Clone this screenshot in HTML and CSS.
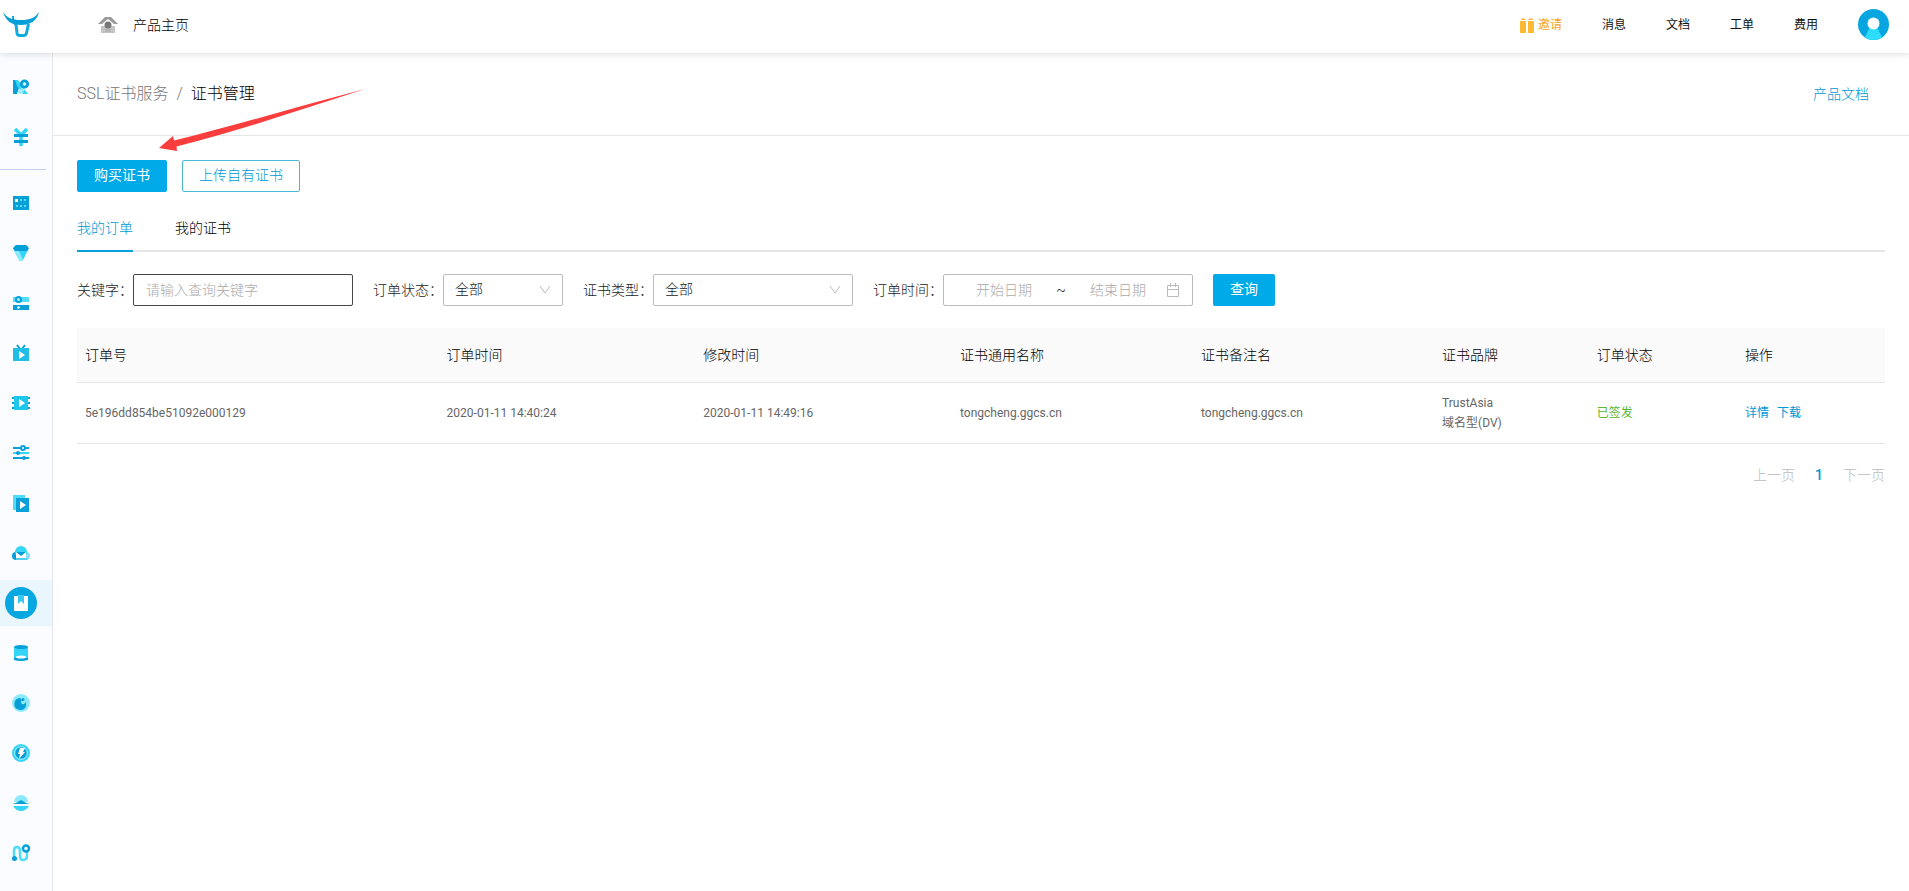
FILE: index.html
```html
<!DOCTYPE html>
<html lang="zh-CN">
<head>
<meta charset="utf-8">
<title>证书管理</title>
<link rel="stylesheet" href="styles.css">
</head>
<body>
<header class="topbar">
  <a class="logo" href="#" aria-label="首页">
    <svg width="38" height="28" viewBox="0 0 38 28"><path d="M1 1C5 7 10 9 19 9S33 7 37 1C35 10 28 14 19 14 9 14 4 10 1 1Z" fill="#079fd8"/><path d="M10 5h2v5l2 4H12Q10 10 10 5Z" fill="#079fd8"/><path d="M14 13l1 9q.4 2.500 2.500 2.500h4q2.500 0 3-2.500l2-9" fill="none" stroke="#12a9df" stroke-width="3"/></svg>
  </a>
  <a class="home" href="#">
    <svg width="20" height="17" viewBox="0 0 20 17"><path d="M0 8 7 1h6l7 7h-4l-6-5-6 5Z" fill="#999"/><path d="M3 10h14v7H3Z" fill="#c4c4c4"/><circle cx="10" cy="9" r="3.500" fill="#777"/><path d="M7 13h6v3H7Z" fill="#b4b4b4"/></svg>
    <span>产品主页</span>
  </a>
  <nav class="topnav">
    <a class="invite" href="#"><svg width="14" height="16" viewBox="0 0 14 16" fill="#fdb933"><path d="M0 4h6v2H0zM8 4h6v2H8zM0 6h6v10H0zM8 6h6v10H8z"/><path d="M1 3Q2-1 6 3ZM8 3q4-4 5 0Z"/></svg>邀请</a>
    <a href="#">消息</a><a href="#">文档</a><a href="#">工单</a><a href="#">费用</a>
  </nav>
  <button class="avatar" aria-label="账户"><svg width="31" height="31" viewBox="0 0 31 31"><circle cx="15.500" cy="15.500" r="15.500" fill="#07a6e1"/><path d="M12 18h7l5 10.500Q15.500 33.500 7 28.500Z" fill="#2ddcff"/><circle cx="15.500" cy="14.500" r="6" fill="#fff"/></svg></button>
</header>
<div class="shell">
  <nav class="sidebar" aria-label="产品">
    <a href="#"><svg width="18" height="18" viewBox="0 0 18 18"><path d="M1 2h4l3 5-3 9H1Z" fill="#079fd8"/><path d="M3 2h3l10 14h-5L5 8Z" fill="#35d5f7"/><path d="m5 15 5-6 3 3-4 4Z" fill="#9cecfc"/><circle cx="12.500" cy="6" r="3.200" fill="#d8f7ff" stroke="#079fd8" stroke-width="2.800"/></svg></a>
    <a href="#"><svg width="18" height="18" viewBox="0 0 18 18"><path d="m3 1 6 6 6-6M9 6v12" fill="none" stroke="#35d5f7" stroke-width="3.500"/><path d="M2 6h14v3H2zM2 12h14v3H2z" fill="#079fd8"/></svg></a>
    <hr>
    <a href="#"><svg width="18" height="18" viewBox="0 0 18 18"><path d="M1 2h16v14H1Z" fill="#07a0d9"/><path d="M3 5h3v3H3Z" fill="#fff"/><path d="M8 5h2v2H8zM12 5h2v2h-2zM4 11h2v2H4zM8 11h2v2H8zM12 11h2v2h-2z" fill="#4fe0fb"/></svg></a>
    <a href="#"><svg width="18" height="18" viewBox="0 0 18 18"><path d="M2 6h14L11 16q-2 2-4 0Z" fill="#35d5f7"/><path d="M2 7h5l4 9q-2 2-4 0Z" fill="#8beafa"/><path d="M4 1h10q5 3 1 6H3Q-1 4 4 1Z" fill="#079fd8"/></svg></a>
    <a href="#"><svg width="18" height="18" viewBox="0 0 18 18"><path d="M1 3h16v5H1Z" fill="#4fdcf8"/><path d="M1 11h16v5H1Z" fill="#079fd8"/><circle cx="6.500" cy="5.500" r="2.500" fill="#aaf2ff" stroke="#079fd8" stroke-width="2"/><circle cx="6.500" cy="13.500" r="1.300" fill="#fff"/></svg></a>
    <a href="#"><svg width="18" height="18" viewBox="0 0 18 18"><path d="m5 1 3 4M13 1l-3 4" stroke="#079fd8" stroke-width="2"/><path d="M1 4h16v13H1Z" fill="#20bde7"/><path d="m7 7 6 4-6 4Z" fill="#fff"/></svg></a>
    <a href="#"><svg width="18" height="18" viewBox="0 0 18 18"><path d="M2 2h14v14H2Z" fill="#20c7ed"/><path d="M0 3h2v2H0zM0 8h2v2H0zM0 13h2v2H0zM16 3h2v2h-2zM16 8h2v2h-2zM16 13h2v2h-2z" fill="#079fd8"/><path d="m7 5 6 4-6 4Z" fill="#fff"/></svg></a>
    <a href="#"><svg width="18" height="18" viewBox="0 0 18 18" fill="none" stroke="#079fd8" stroke-width="2"><path d="M1 4h16M1 14h16"/><path d="M1 9h16" stroke="#35d5f7"/><circle cx="11" cy="4" r="2" fill="#fff"/><circle cx="6" cy="9" r="1"/><circle cx="12" cy="14" r="1"/></svg></a>
    <a href="#"><svg width="18" height="18" viewBox="0 0 18 18"><path d="M1 1h12v15H1Z" fill="#4fdcf8"/><path d="M4 4h13v14H4Z" fill="#07a0d9"/><path d="m8 7 6 4-6 4Z" fill="#fff"/></svg></a>
    <a href="#"><svg width="18" height="18" viewBox="0 0 18 18"><circle cx="4" cy="12" r="4" fill="#079fd8"/><circle cx="14" cy="12" r="4" fill="#8bdcf4"/><circle cx="9" cy="8" r="6" fill="#35d5f7"/><path d="M4 8h10v6H4Z" fill="#fff"/><path d="m4 8 5 4 5-4Z" fill="#079fd8"/><path d="M4 14h11v2H4Z" fill="#53cdee"/></svg></a>
    <a class="current" href="#" aria-current="page"><svg width="32" height="32" viewBox="0 0 32 32"><circle cx="16" cy="16" r="16" fill="#07a7e2"/><path d="M9 9h14v15H9Z" fill="#fff"/><path d="M13 8h6v9l-3-3-3 3Z" fill="#36c8ee"/></svg></a>
    <a href="#"><svg width="18" height="18" viewBox="0 0 18 18"><path d="M2 3h14v12H2Z" fill="#35d5f7"/><ellipse cx="9" cy="3" rx="7" ry="2" fill="#079fd8"/><path d="M2 14h14v2q-7 2-14 0Z" fill="#079fd8"/><ellipse cx="9" cy="13" rx="5" ry="1.500" fill="#fff"/></svg></a>
    <a href="#"><svg width="18" height="18" viewBox="0 0 18 18"><circle cx="9" cy="9" r="9" fill="#8beafa"/><path d="M8 4a6 6 0 1 0 6 8V8q-2 3-4 2-2-2 0-4Z" fill="#079fd8"/><circle cx="11" cy="5.500" r="1.500" fill="#079fd8"/></svg></a>
    <a href="#"><svg width="18" height="18" viewBox="0 0 18 18"><circle cx="9" cy="9" r="9" fill="#35d5f7"/><circle cx="9" cy="9" r="6.300" fill="#079fd8" stroke="#b5f2fc"/><path d="M8 4h5l-2 4h2l-6 7 1-5H6Z" fill="#fff"/></svg></a>
    <a href="#"><svg width="18" height="18" viewBox="0 0 18 18"><path d="M2 8a7 7 0 0 1 14 0Z" fill="#8beafa"/><path d="M0 10Q5 9 9 6q4 3 9 4Z" fill="#079fd8"/><path d="M1 12h16q-3 5-8 5T1 12Z" fill="#35d5f7"/></svg></a>
    <a href="#"><svg width="18" height="18" viewBox="0 0 18 18" fill="none"><path d="M2 14V7q0-4 3-4t3 4v5q0 4 3 4 4 0 4-5V7" stroke="#4fdcf8" stroke-width="2.500"/><circle cx="2.500" cy="14.500" r="2.500" fill="#079fd8"/><circle cx="14" cy="4.500" r="3" fill="#fff" stroke="#079fd8" stroke-width="2.500"/></svg></a>
  </nav>
  <main class="content">
    <div class="pagehead">
      <nav class="crumbs"><a href="#">SSL证书服务</a><span class="slash">/</span><span class="here">证书管理</span></nav>
      <a class="docs" href="#">产品文档</a>
      <svg class="pointer" width="206" height="64" viewBox="0 0 206 64"><path d="M0 59 14 47 15 51.500C75 37 140 17 206 0 140 21 80 42 17.500 57.500L18 62Z" fill="#fa3d3d"/></svg>
    </div>
    <div class="body">
      <div class="actions"><button class="btn primary">购买证书</button><button class="btn outline">上传自有证书</button></div>
      <div class="tabs" role="tablist"><button class="tab selected" role="tab" aria-selected="true">我的订单</button><button class="tab" role="tab" aria-selected="false">我的证书</button></div>
      <form class="filters">
        <div class="field"><label for="kw">关键字：</label><input class="box keyword" id="kw" type="text" placeholder="请输入查询关键字"></div>
        <div class="field"><label for="state">订单状态：</label><select class="box state" id="state"><option>全部</option></select></div>
        <div class="field"><label for="type">证书类型：</label><select class="box type" id="type"><option>全部</option></select></div>
        <div class="field"><label for="from">订单时间：</label>
          <div class="box range"><input id="from" type="text" placeholder="开始日期"><span>~</span><input type="text" placeholder="结束日期" aria-label="结束日期"><svg width="14" height="14" viewBox="0 0 14 14" fill="none" stroke="#bbb"><path d="M1.500 2.500h11v11h-11ZM1.500 6.500h11M4.500 0v4M9.500 0v4"/></svg></div></div>
        <button class="btn primary" type="button">查询</button>
      </form>
      <table class="orders">
        <colgroup><col class="c-id"><col class="c-time"><col class="c-time"><col class="c-name"><col class="c-name"><col class="c-brand"><col class="c-state"><col class="c-state"></colgroup>
        <thead><tr><th>订单号</th><th>订单时间</th><th>修改时间</th><th>证书通用名称</th><th>证书备注名</th><th>证书品牌</th><th>订单状态</th><th>操作</th></tr></thead>
        <tbody><tr><td>5e196dd854be51092e000129</td><td>2020-01-11 14:40:24</td><td>2020-01-11 14:49:16</td><td>tongcheng.ggcs.cn</td><td>tongcheng.ggcs.cn</td><td>TrustAsia<br>域名型(DV)</td><td class="issued">已签发</td><td><div class="ops"><a href="#">详情</a><a href="#">下载</a></div></td></tr></tbody>
      </table>
      <nav class="pager" aria-label="分页"><button disabled>上一页</button><a href="#" aria-current="page">1</a><button disabled>下一页</button></nav>
    </div>
  </main>
</div>
</body>
</html>
```
FILE: styles.css
```css
* { box-sizing: border-box; }
body {
  margin: 0;
  min-height: 100vh;
  display: flex;
  flex-direction: column;
  background: #fff;
  color: #000;
  font: 300 14px/20px Roboto, "Noto Sans CJK SC", sans-serif;
}
a { color: #0098d4; text-decoration: none; }
button, input, select { font: inherit; color: inherit; margin: 0; }
button { border: 0; background: none; padding: 0; cursor: pointer; }
svg { display: block; flex: none; }

.topbar {
  position: relative;
  z-index: 2;
  display: flex;
  align-items: center;
  height: 53px;
  padding: 0 20px 4px 2px;
  background: #fff;
  box-shadow: 0 1px 7px rgba(0, 0, 0, .14);
}
.home { display: flex; align-items: center; gap: 15px; margin-left: 58px; color: #000; }
.topnav { display: flex; gap: 40px; margin: 0 40px 0 auto; font-size: 12px; font-weight: 400; }
.topnav a { color: #111; }
.topnav .invite { display: flex; align-items: center; gap: 4px; color: #f5a623; }

.shell { flex: 1; display: flex; }
.sidebar {
  width: 53px;
  flex: none;
  padding-top: 11px;
  background: #fafcff;
  border-right: 1px solid #e6e8ec;
}
.sidebar a {
  display: flex;
  align-items: center;
  justify-content: center;
  height: 46px;
  margin-bottom: 4px;
  padding-right: 10px;
}
.sidebar .current { background: #e9f6fe; }
.sidebar hr { width: 46px; height: 1px; margin: 9px 0 10px; border: 0; background: #c5cff0; }

.content { flex: 1; min-width: 0; }
.pagehead {
  position: relative;
  display: flex;
  align-items: center;
  justify-content: space-between;
  height: 83px;
  padding: 0 40px 0 24px;
  border-bottom: 1px solid #e6e6e6;
}
.crumbs { display: flex; gap: 8px; font-size: 16px; }
.crumbs a, .slash { color: #777; }
.pointer { position: absolute; left: 106px; top: 36px; z-index: 1; pointer-events: none; }

.body { padding: 24px; }
.actions { display: flex; gap: 15px; }
.btn { height: 32px; padding: 0 17px 2px; border-radius: 2px; }
.primary { background: #00a9e8; color: #fff; font-weight: 400; }
.outline { background: #fff; color: #0098d4; border: 1px solid #4bb8d8; padding: 0 16px 2px; }
.tabs { display: flex; gap: 42px; margin-top: 15px; box-shadow: inset 0 -2px #e6e6e6; }
.tab { height: 45px; padding-bottom: 1px; border-bottom: 2px solid transparent; }
.selected { color: #0098d4; border-color: #07a0d9; }

.filters { display: flex; flex-wrap: wrap; gap: 20px; margin-top: 22px; color: #222; }
.field { display: flex; align-items: center; }
.field label { width: 70px; white-space: nowrap; }
.field:first-child label { width: 56px; }
.box { height: 32px; border: 1px solid #bbb; border-radius: 2px; background-color: #fff; }
.keyword { width: 220px; padding: 0 12px; border-color: #444; }
input::placeholder { color: #aaa; opacity: 1; }
select.box {
  appearance: none;
  padding: 0 11px 2px;
  background: url("data:image/svg+xml,%3Csvg xmlns='http://www.w3.org/2000/svg' width='12' height='8'%3E%3Cpath d='M1 0l5 7 5-7' fill='none' stroke='%23bbb'/%3E%3C/svg%3E") no-repeat right 11px center;
}
.state { width: 120px; }
.type { width: 200px; }
.range { display: flex; align-items: center; width: 250px; padding: 0 12px; }
.range input { flex: 1; width: 0; min-width: 0; padding: 0; border: 0; text-align: center; background: none; }
.range span { width: 18px; text-align: center; }

.orders { width: 100%; margin-top: 22px; table-layout: fixed; border-collapse: collapse; }
.c-id { width: 20%; }
.c-time { width: 14.2%; }
.c-name { width: 13.33%; }
.c-brand { width: 8.56%; }
.c-state { width: 8.19%; }
.orders th, .orders td { padding: 0 8px; text-align: left; border-bottom: 1px solid #e6e6e6; }
.orders th { height: 54px; background: #fafafa; font-weight: 300; }
.orders td { height: 61px; color: #666; font-size: 12px; font-weight: 400; }
.orders .issued { color: #5cb531; }
.ops { display: flex; gap: 8px; }
.pager { display: flex; justify-content: flex-end; gap: 20px; margin-top: 21px; }
.pager button { color: #bbb; cursor: default; }
.pager a { font-weight: 500; }
```
